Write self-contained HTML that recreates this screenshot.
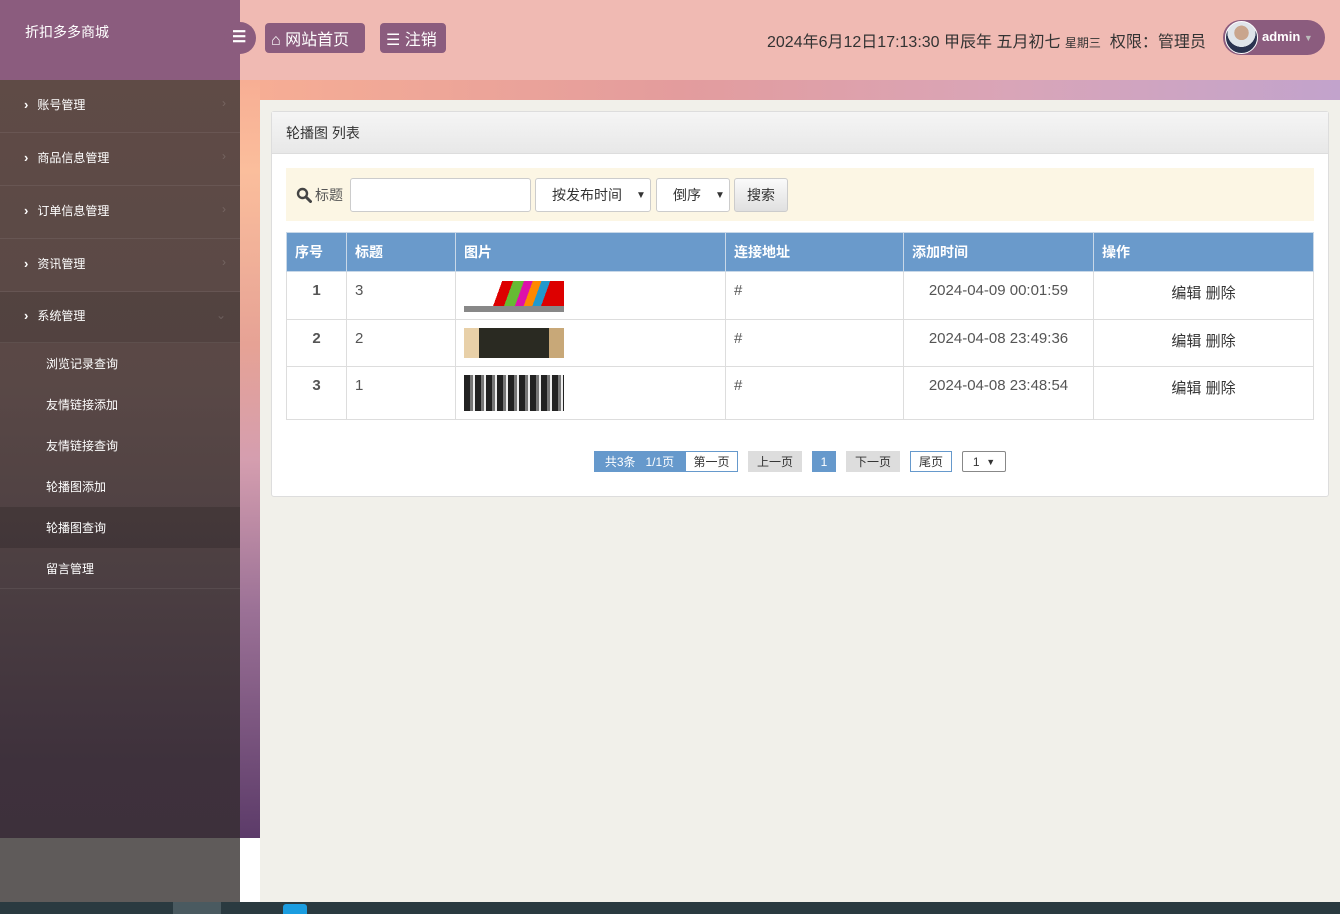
<!DOCTYPE html>
<html><head><meta charset="utf-8"><style>
*{margin:0;padding:0;box-sizing:border-box}
body{width:1340px;height:914px;overflow:hidden;font-family:"Liberation Sans","Noto Sans CJK SC",sans-serif;position:relative;background:#f1f0ea}
.abs{position:absolute}
#brand{left:0;top:0;width:240px;height:80px;background:#8b5c7e;color:#fff;font-size:14px;padding:22px 0 0 25px}
#top{left:240px;top:0;width:1100px;height:80px;background:#f0bab3}
#strip{left:240px;top:80px;width:1100px;height:20px;background:linear-gradient(90deg,#f7ae94 0%,#e39c9d 40%,#d9a5b8 70%,#c2a3cc 100%)}
#lstrip{left:240px;top:80px;width:20px;height:758px;background:linear-gradient(180deg,#f7ae94 0%,#fbbe9c 12%,#e6a295 35%,#d59eaf 50%,#9b7196 70%,#5c3b69 100%)}
#lwhite{left:240px;top:838px;width:20px;height:64px;background:#fff}
#side{left:0;top:80px;width:240px;height:758px;background:linear-gradient(180deg,#5f4b46 0%,#594846 40%,#4c3f42 65%,#3e313c 90%,#3d303b 100%)}
#sidebot{left:0;top:838px;width:240px;height:64px;background:#5f5b5a}
#task{left:0;top:902px;width:1340px;height:12px;background:#2a3a40}
.mi{height:53px;border-bottom:1px solid rgba(255,255,255,.07);color:#fff;font-size:12px;display:flex;align-items:center;padding-left:24px;padding-bottom:4px;position:relative}
.mi b{font-weight:bold;margin-right:9px;font-size:13px}
.mi i{position:absolute;right:14px;top:16px;color:rgba(255,255,255,.15);font-style:normal;font-size:12px}
.si{height:41px;color:#fff;font-size:12px;display:flex;align-items:center;padding-left:46px}
.btn{background:#8b5c7e;color:#fff;border-radius:4px;font-size:16px;height:30px;top:23px;display:flex;align-items:center;padding:0 6px;white-space:nowrap}
#panel{left:271px;top:111px;width:1058px;height:386px;background:#fff;border:1px solid #ddd;border-radius:3px}
#ph{height:42px;background:linear-gradient(#f5f5f5,#e8e8e8);border-bottom:1px solid #ddd;font-size:14px;color:#333;padding:11px 0 0 14px}
#search{left:286px;top:168px;width:1028px;height:53px;background:#fcf6e4}
.inp{position:absolute;top:10px;height:34px;border:1px solid #ccc;border-radius:3px;background:#fff;font-size:14px;color:#333;display:flex;align-items:center}
table{position:absolute;left:286px;top:232px;width:1028px;border-collapse:collapse;font-size:15px;color:#555}
th{background:#6a9acb;color:#fff;text-align:left;height:39px;padding-left:8px;border:1px solid #c8d8e8;font-size:14px}
td{border:1px solid #ddd;vertical-align:top;padding:10px 8px 0}
.pg{position:absolute;top:451px;height:21px;font-size:12px;display:flex;align-items:center;justify-content:center}
</style></head><body>
<div id="brand" class="abs">折扣多多商城</div>
<div id="top" class="abs"></div>
<div class="abs" style="left:224px;top:22px;width:32px;height:32px;border-radius:16px;background:#8b5c7e;color:#fff;font-size:16px;font-weight:bold;padding:5px 0 0 8px">☰</div>
<div class="abs btn" style="left:265px;width:100px">⌂&nbsp;网站首页</div>
<div class="abs btn" style="left:380px;width:66px">☰&nbsp;注销</div>
<div class="abs" style="left:767px;top:28px;font-size:16px;color:#333;white-space:nowrap">2024年6月12日17:13:30 甲辰年 五月初七 <span style="font-size:12px">星期三</span>&nbsp; 权限：管理员</div>
<div class="abs" style="left:1223px;top:20px;width:102px;height:35px;border-radius:18px;background:#8b5c7e;color:#fff;font-size:13px;font-weight:bold;padding:9px 0 0 39px">admin <span style="color:#bbb;font-size:9px">▼</span></div>
<div class="abs" style="left:1225px;top:21px;width:33px;height:33px;border-radius:50%;background:radial-gradient(circle at 50% 35%,#c9a58d 0 28%,#dfe4ea 29% 55%,#2a3350 56%);border:1px solid #fff"></div>
<div id="strip" class="abs"></div>
<div id="lstrip" class="abs"></div>
<div id="lwhite" class="abs"></div>
<div id="side" class="abs">
<div class="mi"><b>›</b>账号管理<i>›</i></div>
<div class="mi"><b>›</b>商品信息管理<i>›</i></div>
<div class="mi"><b>›</b>订单信息管理<i>›</i></div>
<div class="mi"><b>›</b>资讯管理<i>›</i></div>
<div class="mi" style="background:rgba(0,0,0,.08);height:51px"><b>›</b>系统管理<i>⌄</i></div>
<div class="si">浏览记录查询</div>
<div class="si">友情链接添加</div>
<div class="si">友情链接查询</div>
<div class="si">轮播图添加</div>
<div class="si" style="background:rgba(0,0,0,.15)">轮播图查询</div>
<div class="si" style="border-bottom:1px solid rgba(255,255,255,.07)">留言管理</div>
</div>
<div id="sidebot" class="abs"></div>
<div id="task" class="abs"><div class="abs" style="left:173px;top:0;width:48px;height:12px;background:#4a5a60"></div><div class="abs" style="left:283px;top:2px;width:24px;height:10px;background:#1a9de0;border-radius:3px 3px 0 0"></div></div>
<div id="panel" class="abs"><div id="ph">轮播图 列表</div></div>
<div id="search" class="abs">
<svg class="abs" style="left:10px;top:19px" width="16" height="16" viewBox="0 0 16 16"><circle cx="6.5" cy="6.5" r="4.5" fill="none" stroke="#444" stroke-width="2.4"/><path d="M10 10l4.5 4.5" stroke="#444" stroke-width="3" stroke-linecap="round"/></svg>
<div class="abs" style="left:29px;top:17px;font-size:14px;color:#555">标题</div>
<div class="inp" style="left:64px;width:181px"></div>
<div class="inp" style="left:249px;width:116px;padding-left:16px">按发布时间 <span style="margin-left:14px;font-size:10px">▼</span></div>
<div class="inp" style="left:370px;width:74px;padding-left:16px">倒序 <span style="margin-left:14px;font-size:10px">▼</span></div>
<div class="inp" style="left:448px;width:54px;background:linear-gradient(#fafafa,#e0e0e0);justify-content:center">搜索</div>
</div>
<table>
<tr><th style="width:60px">序号</th><th style="width:109px">标题</th><th style="width:270px">图片</th><th style="width:178px">连接地址</th><th style="width:190px">添加时间</th><th>操作</th></tr>
<tr style="height:48px"><td style="text-align:center;font-weight:bold">1</td><td>3</td><td style="padding-top:9px"><div style="width:100px;height:31px;background:linear-gradient(110deg,#fff 0 35%,#d00 35% 45%,#6b3 45% 55%,#d1a 55% 63%,#f80 63% 71%,#29c 71% 79%,#d00 79%);border-bottom:6px solid #888"></div></td><td>#</td><td style="text-align:center">2024-04-09 00:01:59</td><td style="text-align:center;color:#333">编辑 删除</td></tr>
<tr style="height:47px"><td style="text-align:center;font-weight:bold">2</td><td>2</td><td style="padding-top:8px"><div style="width:100px;height:30px;background:linear-gradient(90deg,#e8d0a8 0 15%,#2a2a22 15% 85%,#c8a878 85%)"></div></td><td>#</td><td style="text-align:center">2024-04-08 23:49:36</td><td style="text-align:center;color:#333">编辑 删除</td></tr>
<tr style="height:53px"><td style="text-align:center;font-weight:bold">3</td><td>1</td><td style="padding-top:8px"><div style="width:100px;height:36px;background:repeating-linear-gradient(90deg,#222 0 6px,#777 6px 9px,#eee 9px 11px)"></div></td><td>#</td><td style="text-align:center">2024-04-08 23:48:54</td><td style="text-align:center;color:#333">编辑 删除</td></tr>
</table>
<div class="pg" style="left:594px;width:91px;background:#6699cc;color:#fff">共3条&nbsp;&nbsp; 1/1页</div>
<div class="pg" style="left:685px;width:53px;border:1px solid #6699cc;color:#333;background:#fff">第一页</div>
<div class="pg" style="left:748px;width:54px;background:#ddd;color:#333">上一页</div>
<div class="pg" style="left:812px;width:24px;background:#6699cc;color:#fff">1</div>
<div class="pg" style="left:846px;width:54px;background:#ddd;color:#333">下一页</div>
<div class="pg" style="left:910px;width:42px;border:1px solid #6699cc;color:#333;background:#fff">尾页</div>
<div class="pg" style="left:962px;width:44px;border:1px solid #888;border-radius:2px;background:#fff;color:#333">1 &nbsp;<span style="font-size:9px">▼</span></div>
</body></html>
